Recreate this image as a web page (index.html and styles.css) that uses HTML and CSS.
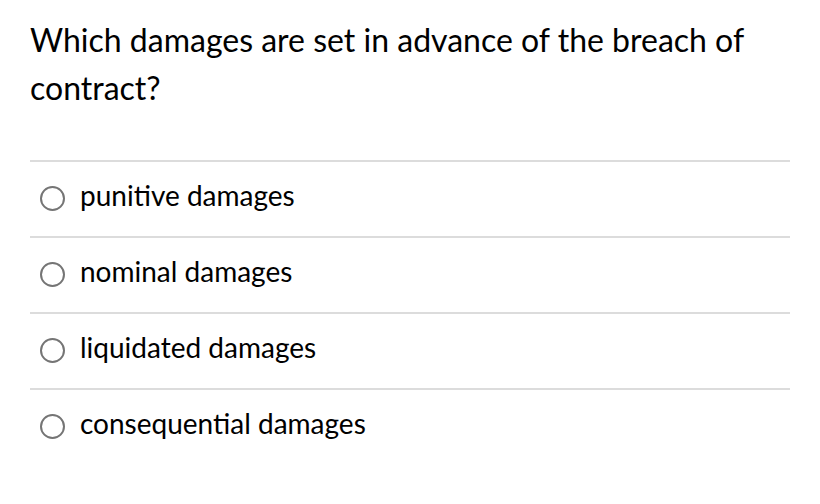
FILE: index.html
```html
<!DOCTYPE html>
<html>
<head>
<meta charset="utf-8">
<link rel="stylesheet" href="styles.css">
</head>
<body>
<div class="quiz">
  <p class="question">Which damages are set in advance of the breach of contract?</p>
  <ul class="options">
    <li class="option"><span class="radio"></span><span class="label">punitive damages</span></li>
    <li class="option"><span class="radio"></span><span class="label">nominal damages</span></li>
    <li class="option"><span class="radio"></span><span class="label">liquidated damages</span></li>
    <li class="option"><span class="radio"></span><span class="label">consequential damages</span></li>
  </ul>
</div>
</body>
</html>
```
FILE: styles.css
```css
html, body {
  margin: 0;
  padding: 0;
  background: #fff;
}
body {
  font-family: Lato, "Open Sans", sans-serif;
  color: #000;
}
.quiz {
  width: 760px;
  padding: 16px 30px 0 30px;
}
.question {
  margin: 0;
  font-size: 32px;
  line-height: 48px;
  width: 740px;
}
.options {
  list-style: none;
  margin: 48px 0 0 0;
  padding: 0;
}
.option {
  display: flex;
  align-items: flex-start;
  gap: 15px;
  height: 74px;
  box-sizing: content-box;
  border-top: 2px solid #dcdcdc;
  padding-left: 10px;
}
.radio {
  width: 25px;
  height: 25px;
  margin-top: 24px;
  border: 2px solid #757575;
  border-radius: 50%;
  box-sizing: border-box;
  flex: none;
}
.label {
  font-size: 28px;
  line-height: 34px;
  margin-top: 16px;
}
```
